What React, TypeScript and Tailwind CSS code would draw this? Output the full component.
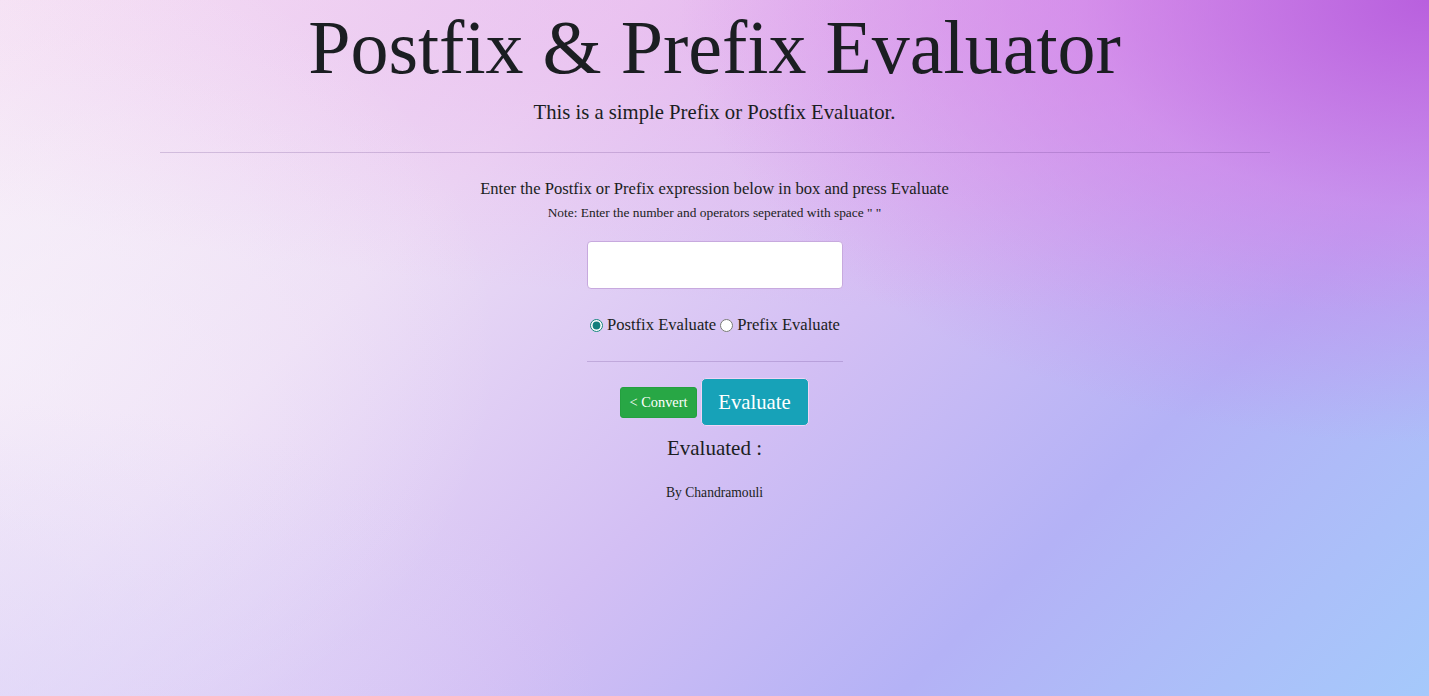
import React from "react";

export default function App() {
  return (
    <div
      className="relative w-full min-h-[696px] h-[696px] overflow-hidden text-[#1b1e22]"
      style={{ fontFamily: '"Liberation Serif", "Times New Roman", serif' }}
    >
      <div className="absolute inset-0 bg-[linear-gradient(135deg,#f8eef6_0%,#ecdcf5_30%,#d3bff4_55%,#b4b2f6_75%,#a5c9fb_100%)]" />
      <div className="absolute inset-0 bg-[radial-gradient(ellipse_110%_45%_at_80%_0%,rgba(230,150,232,0.55)_0%,rgba(230,160,235,0)_100%)]" />
      <div className="absolute inset-0 bg-[radial-gradient(ellipse_70%_85%_at_100%_0%,rgba(182,88,220,0.9)_0%,rgba(205,120,232,0.55)_35%,rgba(210,150,240,0)_75%)]" />
      <div className="absolute inset-0 bg-[radial-gradient(ellipse_35%_60%_at_0%_50%,rgba(248,244,252,0.6)_0%,rgba(248,244,252,0)_100%)]" />
      <div className="absolute inset-0 bg-[radial-gradient(ellipse_60%_60%_at_0%_100%,rgba(222,216,250,0.6)_0%,rgba(222,216,250,0)_70%)]" />

      <div className="relative flex flex-col items-center">
        <h1 className="mt-[2px] text-[76px] leading-[1.2] font-normal whitespace-nowrap">
          Postfix &amp; Prefix Evaluator
        </h1>
        <p className="mt-[4px] text-[20.7px] leading-[1.5]">
          This is a simple Prefix or Postfix Evaluator.
        </p>
        <div className="mt-[24px] w-[1110px] border-t border-[rgba(80,40,120,0.2)]" />

        <p className="mt-[24px] text-[16.6px] leading-[1.5]">
          Enter the Postfix or Prefix expression below in box and press Evaluate
        </p>
        <p className="mt-[1px] text-[13.4px] leading-[1.5]">
          Note: Enter the number and operators seperated with space " "
        </p>

        <input
          type="text"
          className="mt-[18px] w-[256px] h-[48px] bg-white border border-[#c7a9de] rounded-[4px] px-4 text-[20px] outline-none"
        />

        <div className="mt-[24px] flex items-center text-[16.6px] leading-[1.5]">
          <input
            type="radio"
            name="mode"
            defaultChecked
            className="w-[13px] h-[13px] m-0 ml-[1px] mr-[4px] accent-[#127f7c]"
          />
          <span>Postfix Evaluate</span>
          <input
            type="radio"
            name="mode"
            className="w-[13px] h-[13px] m-0 ml-[4px] mr-[4px] accent-[#127f7c]"
          />
          <span>Prefix Evaluate</span>
        </div>

        <div className="mt-[23px] w-[256px] border-t border-[rgba(80,40,120,0.2)]" />

        <div className="mt-[16px] flex items-center gap-[4px]">
          <button className="h-[31px] px-[8px] pt-[2px] bg-[#28a745] border border-[#24a03f] rounded-[3px] text-white text-[14.4px] leading-[1.5]">
            &lt; Convert
          </button>
          <button className="h-[48px] w-[108px] bg-[#17a2b8] border border-[#f1d4f5] rounded-[5px] text-white text-[20.7px] leading-[1.5]">
            Evaluate
          </button>
        </div>

        <p className="mt-[7px] text-[21px] leading-[1.5]">Evaluated :</p>
        <p className="mt-[18px] text-[13.6px] leading-[1.5]">By Chandramouli</p>
      </div>
    </div>
  );
}
